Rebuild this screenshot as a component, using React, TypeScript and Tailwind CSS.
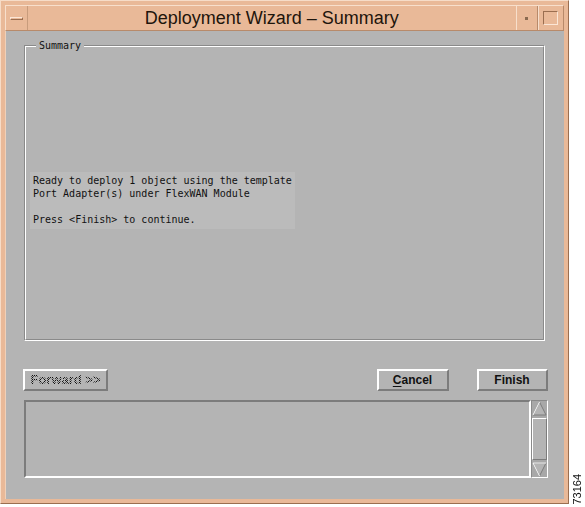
import React from "react"

const mono = "font-['DejaVu_Sans_Mono','Liberation_Mono',monospace]"
const sans = "font-['Liberation_Sans',Arial,sans-serif]"

function WinButton({ children, className = "" }: { children: React.ReactNode; className?: string }) {
  return (
    <div
      className={`h-[22px] border-2 border-t-white border-l-white border-r-[#7c7c7c] border-b-[#7c7c7c] bg-[#b4b4b4] flex items-center justify-center ${className}`}
    >
      {children}
    </div>
  )
}

export default function App() {
  return (
    <div className="w-[585px] h-[507px] bg-white flex">
      {/* Window frame */}
      <div className="w-[571px] h-[504px] bg-[#e9b998] border border-t-[#f6dcc8] border-l-[#f6dcc8] border-r-[#9a6e50] border-b-[#9a6e50] p-[4px] flex flex-col">
        {/* Title bar */}
        <div className="h-[26px] flex border border-t-[#f7dfcc] border-l-[#f7dfcc] border-r-[#b88a6a] border-b-[#b88a6a]">
          <div className="w-[22px] flex items-center justify-center border-r border-r-[#c89c7c]">
            <div className="w-[13px] h-[3px] border border-t-[#fbe6d6] border-l-[#fbe6d6] border-r-[#9a6e50] border-b-[#9a6e50]" />
          </div>
          <div className={`flex-1 flex items-center justify-center text-[18px] text-[#1e150c] ${sans}`}>
            Deployment Wizard – Summary
          </div>
          <div className="w-[22px] flex items-center justify-center border-l border-l-[#f7dfcc] border-r border-r-[#b88a6a]">
            <div className="w-[3px] h-[3px] bg-[#8a6a50]" />
          </div>
          <div className="w-[25px] flex items-center justify-center border-l border-l-[#f7dfcc]">
            <div className="w-[15px] h-[14px] border border-t-[#9a6e50] border-l-[#9a6e50] border-r-[#fbe6d6] border-b-[#fbe6d6]" />
          </div>
        </div>

        {/* Client area */}
        <div className="flex-1 bg-[#b4b4b4] border-l border-l-[#f0d0b8] pl-[17px] pr-[16px] pt-[14px] flex flex-col">
          {/* Summary group */}
          <div className="relative ml-[1px] w-[521px] h-[296px] border border-t-[#8a8a8a] border-l-[#8a8a8a] border-r-white border-b-white">
            <div className="absolute inset-0 border border-t-white border-l-white border-r-[#8a8a8a] border-b-[#8a8a8a]" />
            <div className={`absolute left-[11px] top-[-7px] bg-[#b4b4b4] px-[3px] text-[10px] leading-[13px] text-[#111] ${mono}`}>
              Summary
            </div>
            <div className={`relative mt-[126px] ml-[5px] w-[265px] h-[57px] bg-[#bbbbbb] pl-[3px] pt-[2px] text-[10px] leading-[13px] text-[#111] ${mono}`}>
              <div>Ready to deploy 1 object using the template</div>
              <div>Port Adapter(s) under FlexWAN Module</div>
              <div>&nbsp;</div>
              <div>Press &lt;Finish&gt; to continue.</div>
            </div>
          </div>

          {/* Buttons */}
          <div className="mt-[28px] flex items-center">
            <WinButton className="w-[85px]">
              {/* disabled label, stippled */}
              <span
                className={`text-[13px] font-bold text-transparent bg-clip-text bg-[repeating-conic-gradient(#111_0_25%,transparent_0_50%)] bg-[length:2px_2px] ${sans}`}
              >
                Forward &gt;&gt;
              </span>
            </WinButton>
            <WinButton className="w-[72px] ml-auto">
              <span className={`text-[12px] font-bold text-[#111] ${sans}`}>
                <span className="underline underline-offset-2">C</span>ancel
              </span>
            </WinButton>
            <WinButton className="w-[71px] ml-[28px]">
              <span className={`text-[12px] font-bold text-[#111] ${sans}`}>Finish</span>
            </WinButton>
          </div>

          {/* Message area */}
          <div className="mt-[9px] ml-[1px] h-[78px] flex">
            <div className="flex-1 border-2 border-t-[#7c7c7c] border-l-[#7c7c7c] border-r-white border-b-white" />
            <div className="w-[17px] flex flex-col bg-[#a8a8a8] border border-t-[#8a8a8a] border-l-[#8a8a8a] border-r-white border-b-white">
              <svg width="15" height="16" viewBox="0 0 15 16">
                <polygon points="7.5,1 14,14 1,14" fill="#b4b4b4" stroke="#7c7c7c" />
                <polyline points="1,14 7.5,1" fill="none" stroke="white" />
              </svg>
              <div className="flex-1 my-[1px] border border-t-white border-l-white border-r-[#7c7c7c] border-b-[#7c7c7c] bg-[#b4b4b4]" />
              <svg width="15" height="16" viewBox="0 0 15 16">
                <polygon points="1,2 14,2 7.5,15" fill="#b4b4b4" stroke="#7c7c7c" />
                <polyline points="1,2 14,2" fill="none" stroke="white" />
                <polyline points="1,2 7.5,15" fill="none" stroke="white" />
              </svg>
            </div>
          </div>
        </div>
      </div>

      {/* Figure number */}
      <div className="flex-1 flex items-end justify-center pb-[2px]">
        <span className={`[writing-mode:vertical-rl] rotate-180 text-[11px] text-[#111] ${sans}`}>73164</span>
      </div>
    </div>
  )
}
